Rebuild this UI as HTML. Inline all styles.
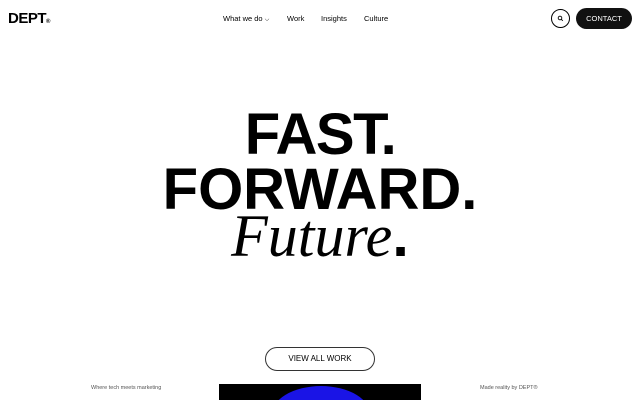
<!DOCTYPE html>
<html><head><style>
*{margin:0;padding:0;box-sizing:border-box}
body{width:640px;height:400px;background:#fff;overflow:hidden;position:relative;font-family:"Liberation Sans",sans-serif;color:#000}
.a{position:absolute;white-space:nowrap}
.nav{font-size:7.5px;top:14px}
.h{font-weight:bold;font-size:58px;line-height:1;left:0;width:640px;text-align:center}
</style></head><body>
<div class="a" style="left:8px;top:10px;font-weight:bold;font-size:15px;letter-spacing:-0.5px">DEPT<span style="font-size:6px">®</span></div>
<div class="a nav" style="left:223px">What we do <span style="font-size:6px">⌵</span></div>
<div class="a nav" style="left:287px">Work</div>
<div class="a nav" style="left:321px">Insights</div>
<div class="a nav" style="left:364px">Culture</div>
<div class="a" style="left:551px;top:9px;width:19px;height:19px;border:1px solid #000;border-radius:50%"></div>
<svg class="a" style="left:557px;top:15px" width="7" height="7" viewBox="0 0 7 7"><circle cx="3" cy="3" r="1.8" fill="none" stroke="#000" stroke-width="0.9"/><line x1="4.3" y1="4.3" x2="5.8" y2="5.8" stroke="#000" stroke-width="0.9"/></svg>
<div class="a" style="left:576px;top:8px;width:56px;height:21px;background:#111;border-radius:11px;color:#fff;font-size:7.5px;text-align:center;line-height:21px">CONTACT</div>
<div class="a h" style="top:106px;letter-spacing:-1.5px">FAST.</div>
<div class="a h" style="top:161px;letter-spacing:0">FORWARD.</div>
<div class="a" style="left:0;width:640px;text-align:center;top:206px;font-size:60px;line-height:1;font-family:'Liberation Serif',serif;font-style:italic;letter-spacing:0">Future<span style="font-family:'Liberation Sans',sans-serif;font-style:normal;font-weight:bold">.</span></div>
<div class="a" style="left:265px;top:347px;width:110px;height:24px;border:1px solid #333;border-radius:12px;font-size:8px;text-align:center;line-height:22px">VIEW ALL WORK</div>
<div class="a" style="left:91px;top:385px;font-size:5.5px;color:#555">Where tech meets marketing</div>
<div class="a" style="left:480px;top:385px;font-size:5.5px;color:#555">Made reality by DEPT®</div>
<div class="a" style="left:219px;top:384px;width:202px;height:16px;background:#000;overflow:hidden"><div style="position:absolute;left:52px;top:2px;width:100px;height:60px;border-radius:50%;background:#1a14e6"></div></div>
</body></html>
